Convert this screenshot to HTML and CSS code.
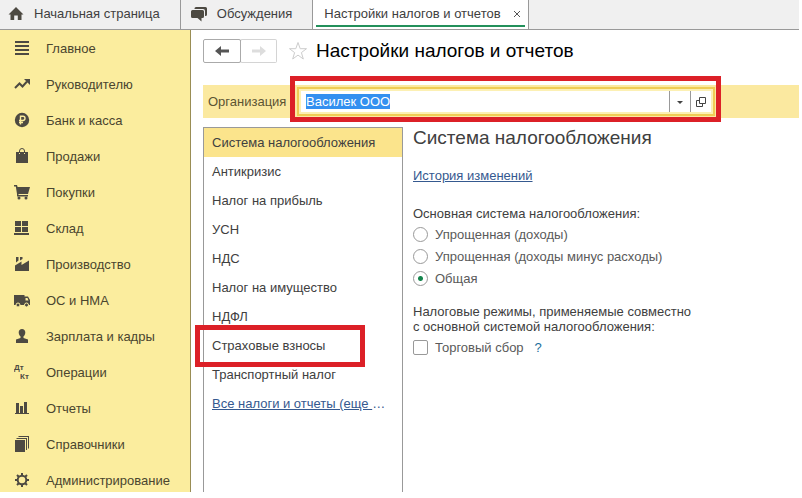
FILE: index.html
```html
<!DOCTYPE html>
<html lang="ru">
<head>
	<meta charset="UTF-8">
	<title>Настройки налогов и отчетов</title>
	<link rel="stylesheet" href="styles.css">
</head>
<body>
	<div class="app">
		<nav class="tabs">
			<a class="tab tab-home" href="#">
				<svg class="icon" viewBox="0 0 16 16"><path d="M8 1 15.500 8.500h-2V14H9.800V9.500H6.200V14H2.500V8.500h-2z"/></svg>
				Начальная страница
			</a>
			<a class="tab tab-talk" href="#">
				<svg class="icon" viewBox="0 0 16 16"><path d="M5 1h9.500Q16 1 16 2.500V8.500Q16 10 14.500 10H14V5Q14 3 12 3H3.500V2.500Q3.500 1 5 1z"/><path d="M1.500 4H11.500Q13 4 13 5.500V10.500Q13 12 11.500 12H10.500V15.500L6.500 12H1.500Q0 12 0 10.500V5.500Q0 4 1.500 4z"/></svg>
				Обсуждения
			</a>
			<div class="tab tab-active">
				<a href="#">Настройки налогов и отчетов</a>
				<button class="tab-close" type="button" aria-label="Закрыть">
					<svg viewBox="0 0 8 8"><path d="M1 1l6 6M7 1L1 7"/></svg>
				</button>
			</div>
		</nav>

		<div class="workspace">
			<ul class="sidebar">
				<li><a href="#"><svg class="icon" viewBox="0 0 16 16"><path d="M1 1h14v2H1zM1 5h14v2H1zM1 9h14v2H1zM1 13h14v2H1z"/></svg>Главное</a></li>
				<li><a href="#"><svg class="icon" viewBox="0 0 16 16"><path class="line" d="M1 12 5.500 7.500 8.500 10.500 13 5.500"/><path d="M10 3h6v6z"/></svg>Руководителю</a></li>
				<li><a href="#"><svg class="icon" viewBox="0 0 16 16"><circle cx="8" cy="8" r="7.200"/><path class="cut" d="M6.500 12.500V4.200H9Q11 4.200 11 6.300T9 8.500H5M5 10.500H9"/></svg>Банк и касса</a></li>
				<li><a href="#"><svg class="icon" viewBox="0 0 16 16"><path d="M2 4h3v2h1V4h4v2h1V4h3v11H2z"/><path class="thin" d="M5.500 5V3Q5.500.5 8 .5T10.500 3V5"/></svg>Продажи</a></li>
				<li><a href="#"><svg class="icon" viewBox="0 0 16 16"><path d="M0 1h3l.6 2H16l-2 7H4.500v1H14v1.500H3V10L1.800 2.500H0z"/><circle cx="5" cy="14" r="1.500"/><circle cx="12" cy="14" r="1.500"/></svg>Покупки</a></li>
				<li><a href="#"><svg class="icon" viewBox="0 0 16 16"><path d="M1 1h6v5H1zM8 1h6v5H8zM1 7h6v5H1zM8 7h6v5H8zM0 13h15v2H0z"/></svg>Склад</a></li>
				<li><a href="#"><svg class="icon" viewBox="0 0 16 16"><path d="M1 15V9.500L7.500 5.500V9L15 4.500V15zM2 1h2.500v3.500L2 6.500zM6 1h2.500v2L6 4.500z"/></svg>Производство</a></li>
				<li><a href="#"><svg class="icon" viewBox="0 0 16 16"><path fill-rule="evenodd" d="M0 3h10.500v1.500H14L16 8v5H0zM11.500 6v2.500h3L13.500 6z"/><circle class="wheel" cx="4" cy="13" r="2"/><circle class="wheel" cx="12.500" cy="13" r="2"/></svg>ОС и НМА</a></li>
				<li><a href="#"><svg class="icon" viewBox="0 0 16 16"><path d="M8 1c2 0 3.300 1.400 3.300 3.500S10 9 8 9 4.700 6.600 4.700 4.500 6 1 8 1zM6.500 8h3v2L14 11.500V15H2v-3.500L6.500 10z"/></svg>Зарплата и кадры</a></li>
				<li><a href="#"><svg class="icon" viewBox="0 0 16 16"><text x="0" y="6">Дт</text><text x="6" y="15">Кт</text></svg>Операции</a></li>
				<li><a href="#"><svg class="icon" viewBox="0 0 16 16"><path d="M2 3h3v10H2zM6 6h3v7H6zM10 2h3v11h-3zM1 13h14v1H1z"/></svg>Отчеты</a></li>
				<li><a href="#"><svg class="icon" viewBox="0 0 16 16"><path d="M1 4h10v12H1zM2.500 2H13v12h-1V3H2.500zM4.500 0H15v12.500h-1V1H4.500z"/></svg>Справочники</a></li>
				<li><a href="#"><svg class="icon" viewBox="0 0 16 16"><circle class="line" cx="8" cy="8" r="4.300"/><path class="line" d="M8 1v2.500M8 12.500V15M1 8h2.500M12.500 8H15M3 3l2 2M11 11l2 2M13 3l-2 2M5 11l-2 2"/></svg>Администрирование</a></li>
			</ul>

			<main class="page">
				<div class="page-head">
					<div class="history">
						<button type="button" aria-label="Назад"><svg viewBox="0 0 16 12"><path d="M1 6l6-5v3.500h8v3H7V11z"/></svg></button>
						<button type="button" aria-label="Вперед" disabled><svg viewBox="0 0 16 12"><path d="M15 6L9 1v3.500H1v3h8V11z"/></svg></button>
					</div>
					<button class="star" type="button" aria-label="В избранное"><svg viewBox="0 0 20 20"><path d="M10 1.500l2.200 6.200h6.300l-5.100 3.900 1.900 6.400-5.300-3.900L4.700 18l1.900-6.400L1.500 7.700h6.300z"/></svg></button>
					<h1>Настройки налогов и отчетов</h1>
				</div>

				<div class="org">
					<label for="org">Организация</label>
					<div class="org-field marked">
						<div class="org-value">
							<input id="org" type="text" value="Василек ООО" autofocus>
						</div>
						<button type="button" aria-label="Выбрать"><svg viewBox="0 0 10 10"><path d="M2 4h6L5 7z"/></svg></button>
						<button type="button" aria-label="Открыть"><svg viewBox="0 0 10 10"><path class="outline" d="M3.500.5h6v6h-6zM3.500 3.500h-3v6h6v-3"/></svg></button>
					</div>
				</div>

				<div class="columns">
					<ul class="sections">
						<li class="current"><a href="#">Система налогообложения</a></li>
						<li><a href="#">Антикризис</a></li>
						<li><a href="#">Налог на прибыль</a></li>
						<li><a href="#">УСН</a></li>
						<li><a href="#">НДС</a></li>
						<li><a href="#">Налог на имущество</a></li>
						<li><a href="#">НДФЛ</a></li>
						<li class="marked"><a href="#">Страховые взносы</a></li>
						<li><a href="#">Транспортный налог</a></li>
						<li class="more"><a href="#">Все налоги и отчеты (еще </a>…</li>
					</ul>

					<form class="settings">
						<h2>Система налогообложения</h2>
						<a class="link" href="#">История изменений</a>
						<fieldset>
							<legend>Основная система налогообложения:</legend>
							<label><input type="radio" name="system">Упрощенная (доходы)</label>
							<label><input type="radio" name="system">Упрощенная (доходы минус расходы)</label>
							<label><input type="radio" name="system" checked>Общая</label>
						</fieldset>
						<fieldset>
							<legend>Налоговые режимы, применяемые совместно<br>с основной системой налогообложения:</legend>
							<div class="option">
								<label><input type="checkbox">Торговый сбор</label>
								<a class="help" href="#">?</a>
							</div>
						</fieldset>
					</form>
				</div>
			</main>
		</div>
	</div>

	<script>
		document.getElementById('org').select();
	</script>
</body>
</html>
```
FILE: styles.css
```css
* {
	box-sizing:border-box;
}

body {
	margin:0;
	background:#fff;
	color:#404040;
	font-family:"Liberation Sans",Arial,sans-serif;
	font-size:13px;
	line-height:15px;
}

ul {
	margin:0;
	padding:0;
	list-style-type:none;
}

a {
	color:inherit;
	text-decoration:none;
}

button {
	display:flex;
	align-items:center;
	justify-content:center;
	padding:0;
	border:0;
	background:none;
}

.app {
	display:flex;
	flex-direction:column;
	height:calc(100vh - 6px);
	margin-right:3px;
	overflow:hidden;
}

.icon {
	flex:none;
	width:16px;
	height:16px;
	fill:#4d4a42;
}

/* tabs */

.tabs {
	display:flex;
	flex:none;
	height:30px;
	background:#f0f0f0;
	border-bottom:1px solid #999;
}

.tab {
	display:flex;
	align-items:center;
	padding:0 20px 2px 8px;
	border-right:1px solid #999;
}

.tab-home {
	gap:10px;
}

.tab-talk {
	gap:10px;
	padding-left:10px;
}

.tab-active {
	position:relative;
	gap:8px;
	padding-left:11px;
	padding-right:3px;
	background:#fff;
}

.tab-active::after {
	content:"";
	position:absolute;
	left:3px;
	right:3px;
	bottom:2px;
	height:2px;
	background:#23905b;
}

.tab-close {
	width:16px;
	height:16px;
}

.tab-close svg {
	width:8px;
	height:8px;
	stroke:#555;
}

/* sidebar */

.workspace {
	display:flex;
	flex:1;
	min-height:0;
}

.sidebar {
	flex:none;
	width:191px;
	background:#fbed9e;
	border-right:1px solid #998d55;
	color:#4a452f;
}

.sidebar a {
	display:flex;
	align-items:center;
	gap:16px;
	height:36px;
	padding-left:14px;
}

.icon .line {
	fill:none;
	stroke:#4d4a42;
	stroke-width:2;
}

.icon .thin {
	fill:none;
	stroke:#4d4a42;
}

.icon .cut {
	fill:none;
	stroke:#fbed9e;
	stroke-width:1.4;
}

.icon .wheel {
	stroke:#fbed9e;
}

.icon text {
	font-size:8px;
	font-weight:bold;
}

/* page */

.page {
	display:flex;
	flex:1;
	flex-direction:column;
	min-width:0;
	padding:9px 0 0 12px;
}

.page-head {
	display:flex;
	align-items:center;
	height:24px;
}

.history {
	display:flex;
}

.history button {
	width:38px;
	height:24px;
	border:1px solid #aaa;
	border-radius:2px;
}

.history button:disabled {
	width:37px;
	margin-left:-1px;
	border-color:#d4d4d4;
	border-left-color:#aaa;
}

.history svg {
	width:16px;
	height:12px;
	fill:#555;
}

.history button:disabled svg {
	fill:#ddd;
}

.star {
	width:20px;
	height:20px;
	margin:0 8px 0 11px;
}

.star svg {
	width:20px;
	height:20px;
	fill:none;
	stroke:#ccc;
}

h1,h2 {
	margin:0;
	font-size:19px;
	font-weight:normal;
	line-height:22px;
}

h1 {
	color:#000;
}

.org {
	display:flex;
	align-items:center;
	height:33px;
	margin-top:22px;
	padding-left:5px;
	background:#fbe9a0;
}

.org label {
	flex:none;
	width:89px;
	color:#5c5433;
}

.org-field {
	display:flex;
	width:418px;
	height:29px;
	padding:2px;
	border:2px solid #efcc55;
	background:#fff;
	box-shadow:inset 0 0 0 2px #fcf0b4;
}

.org-value {
	flex:1;
	padding:2px 5px;
}

.org-value input {
	width:100%;
	height:17px;
	padding:0;
	border:0;
	outline:0;
	background:none;
	color:#404040;
	font:inherit;
}

.org-value input::selection {
	background:#3390f0;
	color:#fff;
}

.org-field button {
	width:21px;
	border-left:1px solid #999;
}

.org-field svg {
	width:10px;
	height:10px;
	fill:#444;
}

.org-field .outline {
	fill:none;
	stroke:#444;
}

/* red frames around the things to look at */

.marked {
	position:relative;
}

.marked::after {
	content:"";
	position:absolute;
	z-index:1;
	border:5px solid #dc2027;
	pointer-events:none;
}

.org-field.marked::after {
	inset:-13px -8px -8px -9px;
}

.sections .marked::after {
	inset:-6px 37px -7px -9px;
}

/* columns */

.columns {
	display:flex;
	flex:1;
	gap:10px;
	min-height:0;
	margin-top:9px;
}

.sections {
	flex:none;
	width:200px;
	border:1px solid #999;
	border-bottom:0;
}

.sections li {
	height:29px;
	padding-left:8px;
	line-height:29px;
	white-space:nowrap;
}

.sections .current {
	background:#fbe48c;
}

.sections .more,
.link {
	color:#35598f;
}

.sections .more a,
.link {
	text-decoration:underline;
	white-space:pre;
}

.settings {
	flex:1;
	min-width:0;
}

.link {
	display:block;
	margin:19px 0 23px;
}

fieldset {
	margin:0 0 15px;
	padding:0;
	border:0;
}

legend {
	margin-bottom:2px;
	padding:0;
}

.settings label {
	display:flex;
	align-items:center;
	gap:7px;
	height:22px;
	color:#5a5a5a;
}

.settings input {
	appearance:none;
	width:15px;
	height:15px;
	margin:0;
	border:1px solid #999;
	border-radius:2px;
	background:#fff;
}

.settings input[type=radio] {
	border-radius:50%;
}

.settings input[type=radio]:checked {
	background:radial-gradient(circle,#14844c 2px,#fff 3px);
}

.option {
	display:flex;
	align-items:center;
	gap:11px;
}

.help {
	color:#1b6f9c;
}
```
